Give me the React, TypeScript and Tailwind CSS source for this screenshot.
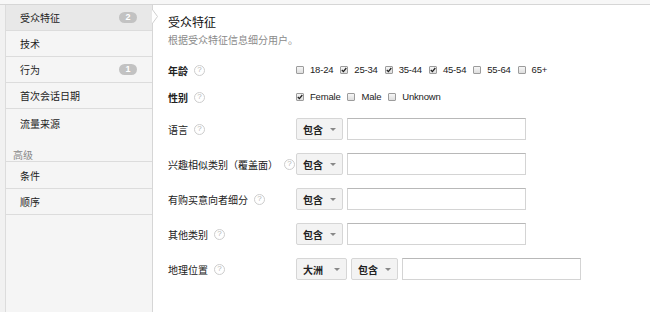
import React from "react";

const font = { fontFamily: '"Noto Sans CJK SC", "Liberation Sans", sans-serif' };
const latin = { fontFamily: '"Liberation Sans", Arial, sans-serif' };

function Help() {
  return (
    <span
      className="ml-[6px] inline-flex h-[11px] w-[11px] shrink-0 items-center justify-center rounded-full border border-[#cdcdcd] text-[8px] leading-none text-[#b5b5b5] font-normal"
      style={latin}
    >
      ?
    </span>
  );
}

function Check({ checked, label }: { checked?: boolean; label: string }) {
  return (
    <span className="mr-[7px] inline-flex shrink-0 items-center">
      <span className="flex h-[8px] w-[8px] items-center justify-center rounded-[1px] border border-[#9c9c9c] bg-gradient-to-b from-[#f6f6f6] to-[#dedede]">
        {checked && (
          <svg width="6" height="6" viewBox="0 0 6 6">
            <path d="M0.8 3 L2.4 4.6 L5.3 1" fill="none" stroke="#222" strokeWidth="1.3" />
          </svg>
        )}
      </span>
      <span className="ml-[6px] whitespace-nowrap text-[9.5px] tracking-[-0.2px] text-[#222]" style={latin}>
        {label}
      </span>
    </span>
  );
}

function Drop({ label, w = "w-[47px]" }: { label: string; w?: string }) {
  return (
    <div className={`flex h-[22px] ${w} shrink-0 items-center justify-between rounded-[2px] border border-[#d6d6d6] bg-[#f3f3f3] pl-[6px] pr-[6px] text-[10px] font-bold text-[#222]`}>
      <span className="whitespace-nowrap">{label}</span>
      <span className="h-0 w-0 border-x-[3px] border-t-[3px] border-x-transparent border-t-[#888]" />
    </div>
  );
}

function Input({ w = "w-[179px]" }: { w?: string }) {
  return <div className={`h-[22px] ${w} shrink-0 border border-[#d4d4d4] border-t-[#b8b8b8] bg-white`} />;
}

const nav = [
  { label: "受众特征", badge: "2", active: true },
  { label: "技术" },
  { label: "行为", badge: "1" },
  { label: "首次会话日期" },
];

export default function App() {
  return (
    <div className="h-[312px] w-[650px] overflow-hidden bg-white text-[10px] text-[#222]" style={font}>
      <div className="h-[5px] border-b border-[#d6d6d6] bg-[#f7f7f7]" />
      <div className="flex h-[307px]">
        <div className="w-[6px] border-r border-[#dcdcdc] bg-[#f1f1f1]" />
        <div className="relative w-[147px] shrink-0 border-r border-[#d6d6d6] bg-[#f5f5f5]">
          {nav.map((n) => (
            <div
              key={n.label}
              className={`relative flex h-[26px] items-center justify-between border-b border-[#dcdcdc] pl-[14px] pr-[15px] ${n.active ? "bg-[#e8e8e8]" : ""}`}
            >
              <span className="whitespace-nowrap">{n.label}</span>
              {n.badge && (
                <span
                  className="flex h-[11px] w-[18px] items-center justify-center rounded-full bg-[#c2c2c2] text-[9px] font-bold leading-none text-white"
                  style={latin}
                >
                  {n.badge}
                </span>
              )}
            </div>
          ))}
          <div className="flex h-[28px] items-center pl-[14px]">流量来源</div>
          <div className="flex h-[24px] items-end pb-[1px] pl-[7px] leading-none text-[#888]">高级</div>
          <div className="flex h-[28px] items-center border-y border-[#dcdcdc] pl-[14px]">条件</div>
          <div className="flex h-[26px] items-center border-b border-[#dcdcdc] pl-[14px]">顺序</div>
          <svg className="absolute right-[-6px] top-[4px]" width="6" height="16" viewBox="0 0 6 16">
            <path d="M0 0 L5.5 7.5 L0 15" fill="#fff" stroke="#cfcfcf" strokeWidth="1" />
          </svg>
        </div>
        <div className="flex-1 pl-[15px] pt-[8px]">
          <div className="text-[12px] leading-[18px] text-[#111]">受众特征</div>
          <div className="mt-[1px] text-[10px] leading-[16px] text-[#8a8a8a]">根据受众特征信息细分用户。</div>
          <div className="mt-[11px] flex flex-col">
            <div className="flex h-[22px] items-center">
              <div className="flex w-[128px] shrink-0 items-center font-bold">年龄<Help /></div>
              <Check label="18-24" />
              <Check checked label="25-34" />
              <Check checked label="35-44" />
              <Check checked label="45-54" />
              <Check label="55-64" />
              <Check label="65+" />
            </div>
            <div className="mt-[5px] flex h-[22px] items-center">
              <div className="flex w-[128px] shrink-0 items-center font-bold">性别<Help /></div>
              <Check checked label="Female" />
              <Check label="Male" />
              <Check label="Unknown" />
            </div>
            {["语言", "兴趣相似类别（覆盖面）", "有购买意向者细分", "其他类别"].map((l, i) => (
              <div key={l} className={`flex h-[22px] items-center gap-[4px] ${i === 0 ? "mt-[10px]" : "mt-[13px]"}`}>
                <div className="flex w-[124px] shrink-0 items-center whitespace-nowrap">{l}<Help /></div>
                <Drop label="包含" />
                <Input />
              </div>
            ))}
            <div className="mt-[13px] flex h-[22px] items-center gap-[4px]">
              <div className="flex w-[124px] shrink-0 items-center whitespace-nowrap">地理位置<Help /></div>
              <Drop label="大洲" w="w-[51px]" />
              <Drop label="包含" />
              <Input />
            </div>
          </div>
        </div>
      </div>
    </div>
  );
}
